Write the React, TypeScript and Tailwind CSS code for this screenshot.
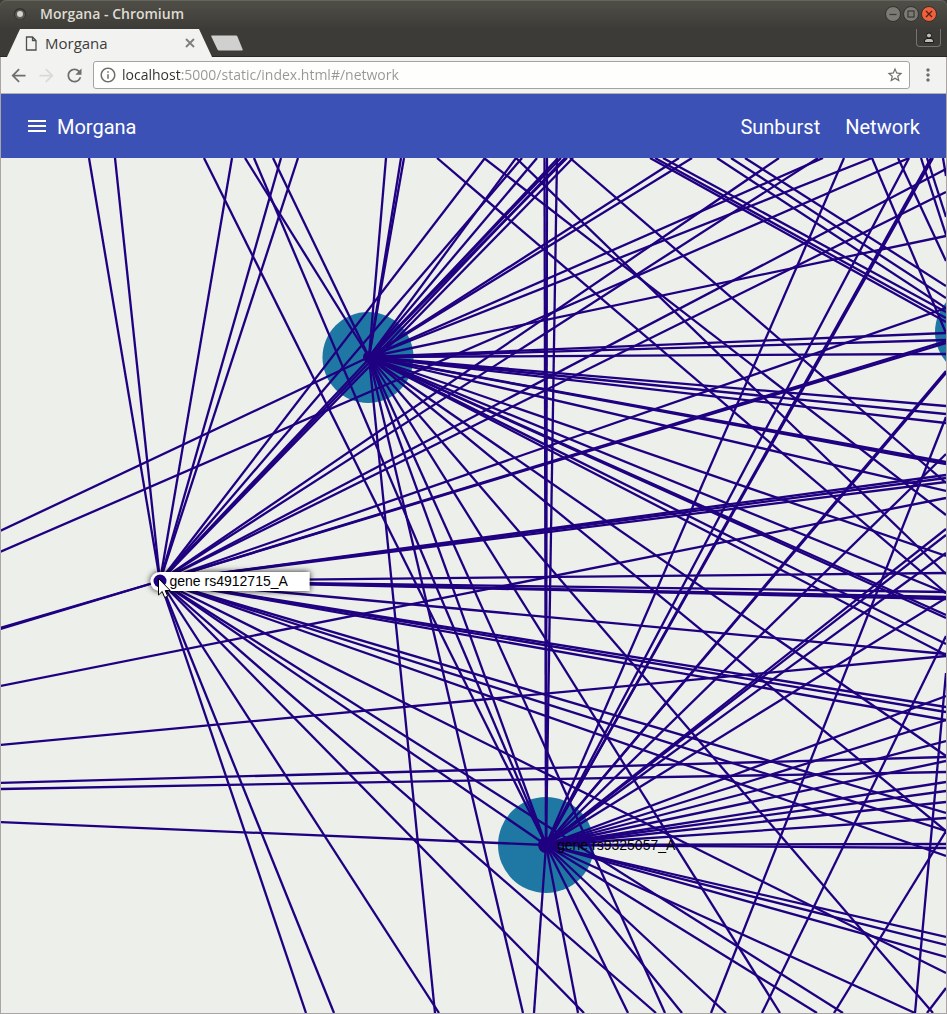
import React from "react";
import {
  MdArrowBack,
  MdArrowForward,
  MdInfoOutline,
  MdMenu,
  MdMoreVert,
  MdRefresh,
  MdStarBorder,
} from "react-icons/md";

type Point = [number, number];

const GENE_A: Point = [160, 581];
const GENE_B: Point = [369, 357];
const GENE_C: Point = [546, 845];

const fromA: Point[] = [
  [89, 158], [115, 158], [232, 158], [281, 158], [298, 158],
  [485, 158], [522, 158], [558, 158], [565, 158], [573, 158],
  [779, 158], [818, 158], [946, 169], [946, 192], [946, 308],
  [946, 341], [946, 343], [946, 475], [946, 478], [946, 482],
  [946, 573], [946, 592], [946, 597], [946, 599], [946, 654],
  [946, 707], [946, 712], [946, 720], [946, 813], [946, 831],
  [946, 856], [946, 973], [843, 1013], [546, 845], [656, 1013],
  [584, 1013], [439, 1013], [334, 1013], [306, 1013],
  [0, 628], [0, 629],
];

const fromB: Point[] = [
  [245, 158], [273, 158], [386, 158], [401, 158], [404, 158],
  [516, 158], [537, 158], [561, 158], [567, 158], [679, 158],
  [692, 158], [823, 158], [872, 158], [946, 236], [946, 333],
  [946, 340], [946, 354], [946, 406], [946, 414], [946, 423],
  [946, 462], [946, 464], [946, 491], [946, 556], [946, 593],
  [946, 615], [946, 618], [946, 644], [946, 655], [946, 756],
  [946, 831], [933, 1013], [780, 1013], [665, 1013], [546, 845],
  [523, 1013], [435, 1013], [0, 531],
];

const fromC: Point[] = [
  [204, 158], [254, 158], [544.5, 158], [547, 158], [557, 158],
  [844, 158], [909, 158], [931, 158], [933, 158], [946, 371],
  [946, 373], [946, 454], [946, 529], [946, 535], [946, 553],
  [946, 598], [946, 696], [946, 720], [946, 741], [946, 761],
  [946, 782], [946, 791], [946, 802], [946, 818], [946, 844],
  [946, 848], [946, 937], [946, 945], [946, 957], [915, 1013],
  [817, 1013], [726, 1013], [682, 1013], [628, 1013], [578, 1013],
  [534, 1013], [0, 822],
];

const passing: [Point, Point][] = [
  [[0, 552], [909, 158]],
  [[0, 686], [946, 498]],
  [[0, 745], [946, 656]],
  [[0, 783], [946, 757]],
  [[0, 789], [946, 772]],
  [[437, 158], [946, 593]],
  [[516, 158], [946, 574]],
  [[484, 158], [946, 515]],
  [[570, 158], [946, 483]],
  [[650, 158], [946, 322]],
  [[655, 158], [946, 318]],
  [[663, 158], [946, 312]],
  [[717, 158], [946, 308]],
  [[731, 158], [946, 298]],
  [[745, 158], [946, 286]],
  [[872, 158], [946, 333]],
  [[898, 158], [946, 261]],
  [[921, 158], [946, 235]],
  [[927, 158], [946, 217]],
  [[943, 158], [946, 176]],
  [[946, 417], [711, 1013]],
  [[946, 636], [762, 1013]],
  [[946, 673], [915, 1013]],
  [[946, 831], [834, 1013]],
  [[946, 988], [927, 1013]],
];

const edges: [Point, Point][] = [
  ...fromA.map((p): [Point, Point] => [GENE_A, p]),
  ...fromB.map((p): [Point, Point] => [GENE_B, p]),
  ...fromC.map((p): [Point, Point] => [GENE_C, p]),
  ...passing,
];

function TitleBar() {
  return (
    <div className="flex h-7 items-center rounded-t-md bg-linear-to-b from-[#504f47] to-[#3d3c38] pr-[10px] pl-[14px] shadow-[inset_0_1px_0_#66655d]">
      <svg className="size-3" viewBox="0 0 12 12" aria-hidden="true">
        <circle cx="6" cy="6" r="6" fill="#31302c" />
        <circle cx="6" cy="6.500" r="5" fill="#5a5953" />
        <circle cx="6" cy="6" r="3" fill="#d6d3cd" />
      </svg>
      <h1 className="ml-[14px] flex-1 font-['Open_Sans',sans-serif] text-[14px] leading-5 font-semibold text-[#dfdbd2]">
        Morgana - Chromium
      </h1>
      <div className="flex gap-[2px]">
        <button aria-label="Minimize" className="size-4">
          <svg viewBox="0 0 16 16">
            <circle cx="8" cy="8" r="7.500" fill="#7b7a73" stroke="#32312d" />
            <path d="M4.500 8.500h7" stroke="#3a3935" strokeWidth="1.200" />
          </svg>
        </button>
        <button aria-label="Maximize" className="size-4">
          <svg viewBox="0 0 16 16">
            <circle cx="8" cy="8" r="7.500" fill="#7b7a73" stroke="#32312d" />
            <rect x="5" y="5" width="6" height="6" fill="none" stroke="#3a3935" strokeWidth="1.200" />
          </svg>
        </button>
        <button aria-label="Close window" className="size-4">
          <svg viewBox="0 0 16 16">
            <circle cx="8" cy="8" r="7.500" fill="#f1603a" stroke="#32312d" />
            <path d="M5 5l6 6M11 5l-6 6" stroke="#4a241a" strokeWidth="1.300" />
          </svg>
        </button>
      </div>
    </div>
  );
}

function TabStrip() {
  return (
    <div className="flex h-[29px] items-start bg-[#3c3b38] pr-[6px] pl-[7px] shadow-[inset_0_-1px_0_#2b2928]">
      <div className="mt-px flex h-7 w-[205px] items-center bg-[#f2f2f0] pr-[15px] pl-[18px] [clip-path:polygon(13px_0,192px_0,100%_100%,0_100%)]">
        <svg className="h-[15px] w-[12px]" viewBox="0 0 12 15" fill="none" stroke="#4f4f4f" aria-hidden="true">
          <path d="M1.500 1h6l3.500 3.500v9.500h-9.500zM7.500 1v3.500h3.500" strokeWidth="1.300" />
        </svg>
        <span className="ml-2 flex-1 font-['Open_Sans',sans-serif] text-[15px] leading-5 text-[#3c3c3c]">
          Morgana
        </span>
        <button aria-label="Close tab" className="size-[14px]">
          <svg viewBox="0 0 14 14" stroke="#7d7d7d" strokeWidth="1.800">
            <path d="M3 3l8 8M11 3l-8 8" />
          </svg>
        </button>
      </div>
      <button aria-label="New tab" className="mt-[7px] -ml-[1px] h-4 w-8">
        <svg viewBox="0 0 32 16">
          <path d="M.5 .5h24.500q1 0 1.400 1l5.300 13q.3 1-.7 1h-23q-1 0-1.500-1l-6.200-13q-.3-1 .5-1z" fill="#d0d0cf" />
        </svg>
      </button>
      <button
        aria-label="Profile"
        className="mt-[1px] ml-auto flex h-[18px] w-[25px] items-center justify-center rounded-b border border-t-0 border-[#75746f]"
      >
        <svg className="h-3 w-3" viewBox="0 0 12 12" fill="#bdbcb8" stroke="#191817" aria-hidden="true">
          <path d="M1.500 10.500v-1.500q0-2 2.500-2.500h4q2.500.5 2.500 2.500v1.500z" />
          <circle cx="6" cy="3.500" r="2.500" />
        </svg>
      </button>
    </div>
  );
}

function Toolbar() {
  return (
    <div className="flex h-[37px] items-center border-b border-[#b2b1ae] bg-[#f2f2f0] pr-2 pl-[7px] text-[#6e6e6e]">
      <div className="flex gap-[7px]">
        <button aria-label="Back">
          <MdArrowBack size={21} />
        </button>
        <button aria-label="Forward" className="text-[#d9d9dc]">
          <MdArrowForward size={21} />
        </button>
        <button aria-label="Reload">
          <MdRefresh size={21} />
        </button>
      </div>
      <div className="ml-2 flex h-7 flex-1 items-center rounded-[3px] border border-[#a3a3a1] bg-[#fefefd] px-[5px]">
        <MdInfoOutline size={18} />
        <input
          aria-label="Address"
          defaultValue="localhost:5000/static/index.html#/network"
          className="ml-[5px] min-w-0 flex-1 bg-[linear-gradient(90deg,#303030_59px,#969696_59px)] bg-clip-text font-['Open_Sans',sans-serif] text-[14px] leading-5 text-transparent outline-none"
        />
        <button aria-label="Bookmark this page">
          <MdStarBorder size={18} />
        </button>
      </div>
      <button aria-label="Browser menu" className="ml-2">
        <MdMoreVert size={20} />
      </button>
    </div>
  );
}

function AppHeader() {
  return (
    <header className="flex h-16 items-center bg-[#3b51b6] pr-[26px] pl-6 font-[Roboto,sans-serif] text-[20px] leading-7 text-white">
      <button aria-label="Open menu">
        <MdMenu size={24} />
      </button>
      <h2 className="ml-2 flex-1 pt-[2px]">Morgana</h2>
      <nav className="flex gap-[25px] pt-[2px]">
        <a href="#/sunburst">Sunburst</a>
        <a href="#/network">Network</a>
      </nav>
    </header>
  );
}

function Network() {
  return (
    <main className="relative flex-1 overflow-hidden bg-[#edefeb]">
      <svg
        className="absolute inset-0 size-full"
        viewBox="1 158 945 855"
        preserveAspectRatio="xMinYMin slice"
        role="img"
        aria-label="Gene network"
      >
        <defs>
          <filter id="glow" x="-20%" y="-80%" width="140%" height="260%">
            <feDropShadow dx="0" dy="0" stdDeviation="3" floodColor="#000" floodOpacity="0.9" />
          </filter>
        </defs>
        <g fill="#1f78a4">
          <circle cx="368" cy="357.500" r="45.500" />
          <circle cx="546" cy="845" r="48" />
          <circle cx="981" cy="332" r="46" />
        </g>
        <g stroke="#1f0080" strokeWidth="2.300">
          {edges.map(([a, b], i) => (
            <line key={i} x1={a[0]} y1={a[1]} x2={b[0]} y2={b[1]} />
          ))}
        </g>
        <g fill="#1f0080">
          <circle cx="369" cy="357" r="6" />
          <circle cx="546" cy="845" r="8" />
        </g>
        <g fontFamily="'Liberation Sans', sans-serif" fontSize="14">
          <text x="557" y="850" fill="#000">
            gene rs9325057_A
          </text>
          <g filter="url(#glow)" fill="#fff">
            <path d="M160 572h149.500v19h-149.500a9.500 9.500 0 0 1 0-19z" />
          </g>
          <circle cx="160" cy="581" r="6.500" fill="#1f0080" />
          <text x="169.500" y="586" fill="#000">
            gene rs4912715_A
          </text>
        </g>
        <path
          d="M158.500 578.500v16.500l3.700-3.500 2.500 6 3-1.300-2.500-5.700h5z"
          fill="#fff"
          stroke="#000"
          strokeWidth="1"
        />
      </svg>
    </main>
  );
}

export default function App() {
  return (
    <div className="flex min-h-screen flex-col bg-[#3c3b38]">
      <TitleBar />
      <TabStrip />
      <div className="flex flex-1 flex-col border-x border-b border-[#aaa4a4]">
        <Toolbar />
        <AppHeader />
        <Network />
      </div>
    </div>
  );
}
